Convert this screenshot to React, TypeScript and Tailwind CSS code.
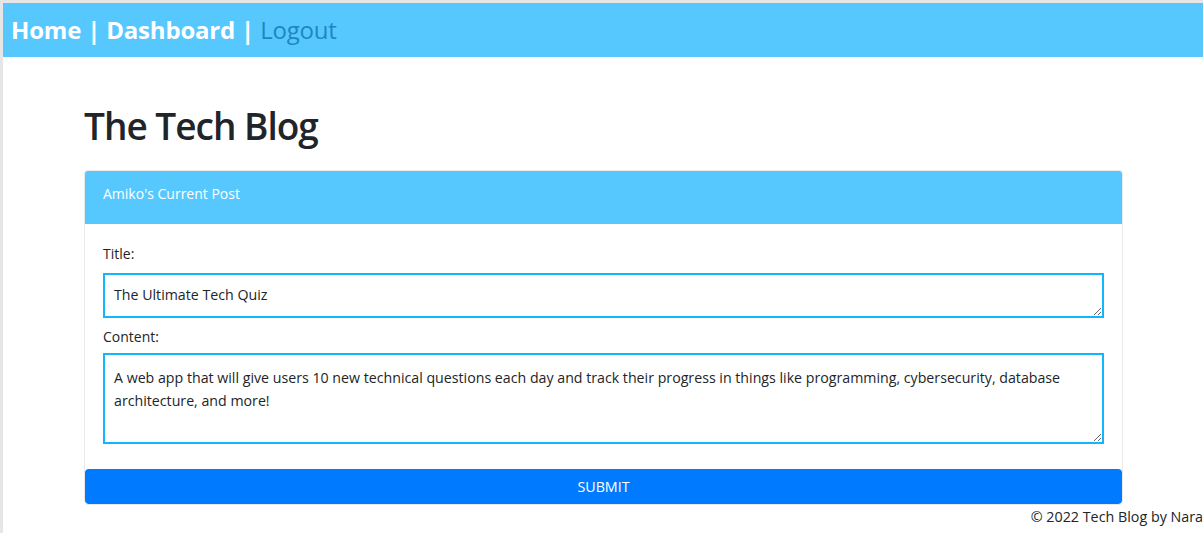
import React from 'react';

const FONT = "font-['Open_Sans','Noto_Sans',sans-serif]";

export default function App() {
  return (
    <div className={`min-h-[533px] bg-white border-t-[3px] border-l-[3px] border-[#e6e6e6] text-[#212529] ${FONT}`}>
      {/* nav */}
      <nav className="h-[54px] bg-[#56c8fe] flex items-center px-[8px] text-[24px] leading-none tracking-[-0.2px]">
        <span className="font-bold text-white whitespace-pre">Home | Dashboard | </span>
        <span className="text-[#1c87c3]">Logout</span>
      </nav>

      <main className="w-[1039px] ml-[81px]">
        <h1 className="mt-[45px] mb-[20px] text-[37px] font-semibold leading-[48px] tracking-[-1px]">The Tech Blog</h1>

        <div className="border border-[#e9e9e9] rounded-[4px] overflow-hidden">
          <div className="h-[53px] bg-[#56c8fe] px-[18px] pt-[11px] text-[14px] leading-[24px] text-white">
            Amiko's Current Post
          </div>
          <form className="px-[18px] pt-[20px] pb-[25px] flex flex-col text-[14px]">
            <label className="leading-[20px]">Title:</label>
            <textarea
              rows={1}
              defaultValue="The Ultimate Tech Quiz"
              className="mt-[9px] h-[45px] border-2 border-[#12b6fc] px-[9px] py-[10px] text-[14.2px] leading-[20px] outline-none resize-y"
            />
            <label className="mt-[9px] leading-[20px]">Content:</label>
            <textarea
              rows={3}
              defaultValue="A web app that will give users 10 new technical questions each day and track their progress in things like programming, cybersecurity, database architecture, and more!"
              className="mt-[6px] h-[91px] border-2 border-[#12b6fc] px-[9px] py-[11px] text-[14.2px] leading-[23px] outline-none resize-y"
            />
          </form>
          <button className="w-full h-[35px] bg-[#007bff] rounded-[4px] text-white text-[14.3px] uppercase">
            Submit
          </button>
        </div>
      </main>

      <footer className="text-right text-[14.3px] leading-[24px] whitespace-nowrap overflow-hidden">
        © 2022 Tech Blog by Nara
      </footer>
    </div>
  );
}
